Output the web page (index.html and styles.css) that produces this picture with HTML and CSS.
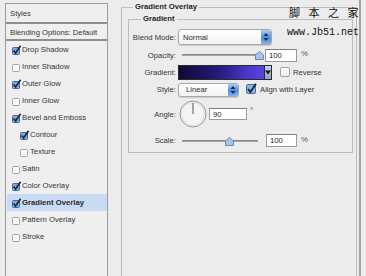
FILE: index.html
```html
<!DOCTYPE html>
<html lang="en">
<head>
    <meta charset="UTF-8">
    <title>Layer Style - Gradient Overlay</title>
    <link rel="stylesheet" href="styles.css">
</head>
<body>

    <div class="dialog">
        <!-- style list on the left -->
        <div class="styles-panel">
            <div class="panel-head">Styles</div>
            <div class="panel-blend">Blending Options: Default</div>
            <ul class="style-list">
                <li><svg class="cb" width="10" height="10" viewBox="0 0 10 10"><rect x="0.5" y="2.5" width="7" height="7" rx="1" fill="#7ea8e0" stroke="#46679e"/><path d="M1.6 5.6 L3.6 8 L8.6 0.8" fill="none" stroke="#16223c" stroke-width="1.6"/></svg>Drop Shadow</li>
                <li><svg class="cb" width="10" height="10" viewBox="0 0 10 10"><rect x="0.5" y="2.5" width="7" height="7" rx="1" fill="#fafafa" stroke="#a4a4a4"/></svg>Inner Shadow</li>
                <li><svg class="cb" width="10" height="10" viewBox="0 0 10 10"><rect x="0.5" y="2.5" width="7" height="7" rx="1" fill="#7ea8e0" stroke="#46679e"/><path d="M1.6 5.6 L3.6 8 L8.6 0.8" fill="none" stroke="#16223c" stroke-width="1.6"/></svg>Outer Glow</li>
                <li><svg class="cb" width="10" height="10" viewBox="0 0 10 10"><rect x="0.5" y="2.5" width="7" height="7" rx="1" fill="#fafafa" stroke="#a4a4a4"/></svg>Inner Glow</li>
                <li><svg class="cb" width="10" height="10" viewBox="0 0 10 10"><rect x="0.5" y="2.5" width="7" height="7" rx="1" fill="#7ea8e0" stroke="#46679e"/><path d="M1.6 5.6 L3.6 8 L8.6 0.8" fill="none" stroke="#16223c" stroke-width="1.6"/></svg>Bevel and Emboss</li>
                <li class="sub"><svg class="cb" width="10" height="10" viewBox="0 0 10 10"><rect x="0.5" y="2.5" width="7" height="7" rx="1" fill="#7ea8e0" stroke="#46679e"/><path d="M1.6 5.6 L3.6 8 L8.6 0.8" fill="none" stroke="#16223c" stroke-width="1.6"/></svg>Contour</li>
                <li class="sub"><svg class="cb" width="10" height="10" viewBox="0 0 10 10"><rect x="0.5" y="2.5" width="7" height="7" rx="1" fill="#fafafa" stroke="#a4a4a4"/></svg>Texture</li>
                <li><svg class="cb" width="10" height="10" viewBox="0 0 10 10"><rect x="0.5" y="2.5" width="7" height="7" rx="1" fill="#fafafa" stroke="#a4a4a4"/></svg>Satin</li>
                <li><svg class="cb" width="10" height="10" viewBox="0 0 10 10"><rect x="0.5" y="2.5" width="7" height="7" rx="1" fill="#7ea8e0" stroke="#46679e"/><path d="M1.6 5.6 L3.6 8 L8.6 0.8" fill="none" stroke="#16223c" stroke-width="1.6"/></svg>Color Overlay</li>
                <li class="sel"><svg class="cb" width="10" height="10" viewBox="0 0 10 10"><rect x="0.5" y="2.5" width="7" height="7" rx="1" fill="#7ea8e0" stroke="#46679e"/><path d="M1.6 5.6 L3.6 8 L8.6 0.8" fill="none" stroke="#16223c" stroke-width="1.6"/></svg>Gradient Overlay</li>
                <li><svg class="cb" width="10" height="10" viewBox="0 0 10 10"><rect x="0.5" y="2.5" width="7" height="7" rx="1" fill="#fafafa" stroke="#a4a4a4"/></svg>Pattern Overlay</li>
                <li><svg class="cb" width="10" height="10" viewBox="0 0 10 10"><rect x="0.5" y="2.5" width="7" height="7" rx="1" fill="#fafafa" stroke="#a4a4a4"/></svg>Stroke</li>
            </ul>
        </div>

        <!-- settings on the right -->
        <fieldset class="group outer">
            <legend>Gradient Overlay</legend>
            <fieldset class="group inner">
                <legend>Gradient</legend>

                <div class="row r-blend">
                    <label>Blend Mode:</label>
                    <div class="select blend-select">Normal<span class="stepper"><svg width="6" height="10" viewBox="0 0 6 10"><path d="M3 1 L5.5 4 L0.5 4 Z M3 9 L5.5 6 L0.5 6 Z" fill="#1b2b48"/></svg></span></div>
                </div>

                <div class="row r-opacity">
                    <label>Opacity:</label>
                    <div class="slider">
                        <div class="track"></div>
                        <svg class="thumb" style="left: 75px" width="9" height="9" viewBox="0 0 9 9"><path d="M4.5 0.5 L8.5 4 L8.5 8.5 L0.5 8.5 L0.5 4 Z" fill="#a9c3e6" stroke="#6a89b4"/></svg>
                    </div>
                    <div class="num">100</div>
                    <span class="unit">%</span>
                </div>

                <div class="row r-gradient">
                    <label>Gradient:</label>
                    <div class="grad-bar"></div>
                    <div class="grad-drop"><svg width="6" height="5" viewBox="0 0 6 5"><path d="M0 0.5 L6 0.5 L3 4.5 Z" fill="#111"/></svg></div>
                    <span class="box reverse-box"></span>
                    <span class="check-label">Reverse</span>
                </div>

                <div class="row r-style">
                    <label>Style:</label>
                    <div class="select style-select">Linear<span class="stepper"><svg width="6" height="10" viewBox="0 0 6 10"><path d="M3 1 L5.5 4 L0.5 4 Z M3 9 L5.5 6 L0.5 6 Z" fill="#1b2b48"/></svg></span></div>
                    <svg class="align-box" width="11" height="11" viewBox="0 0 11 11"><rect x="0.5" y="1.5" width="9" height="9" rx="1.5" fill="#8cb3e6" stroke="#4a6ca3"/><path d="M2 6 L4.4 9 L10 0.8" fill="none" stroke="#15213a" stroke-width="1.8"/></svg>
                    <span class="check-label">Align with Layer</span>
                </div>

                <div class="row r-angle">
                    <label>Angle:</label>
                    <svg class="dial" width="28" height="28" viewBox="0 0 28 28"><circle cx="14" cy="14" r="13" fill="#f4f4f4" stroke="#9a9a9a"/><circle cx="14" cy="14" r="11.5" fill="none" stroke="#dcdcdc"/><line x1="14" y1="14" x2="14" y2="3" stroke="#555" stroke-width="1"/></svg>
                    <div class="num angle-num">90</div>
                    <span class="deg">°</span>
                </div>

                <div class="row r-scale">
                    <label>Scale:</label>
                    <div class="slider">
                        <div class="track"></div>
                        <svg class="thumb" style="left: 45px" width="9" height="9" viewBox="0 0 9 9"><path d="M4.5 0.5 L8.5 4 L8.5 8.5 L0.5 8.5 L0.5 4 Z" fill="#a9c3e6" stroke="#6a89b4"/></svg>
                    </div>
                    <div class="num scale-num">100</div>
                    <span class="unit">%</span>
                </div>
            </fieldset>
        </fieldset>
    </div>

    <!-- site watermark -->
    <div class="watermark">
        <div class="wm-cn">脚 本 之 家</div>
        <div class="wm-url">www.Jb51.net</div>
    </div>

</body>
</html>
```

FILE: styles.css
```css
body {
    margin: 0;
    width: 366px;
    height: 276px;
    overflow: hidden;
    position: relative;
    background-color: #ececec;
    font-family: "Liberation Sans", Arial, sans-serif;
    font-size: 7.7px;
    color: #363636;
}

.dialog {
    display: flex;
    align-items: flex-start;
    width: 359px;
    height: 276px;
    border-right: 2px solid #a2a2a2;
}

/* 左侧样式列表 */
.styles-panel {
    margin: 3px 0 0 5px;
    width: 101px;
    height: 273px;
    border: 1px solid #9c9c9c;
    border-bottom: none;
    background-color: #efefef;
}

.panel-head {
    height: 18px;
    line-height: 19px;
    padding-left: 4px;
    border-bottom: 2px solid #8e8e8e;
}

.panel-blend {
    height: 15px;
    line-height: 17px;
    padding-left: 4px;
    border-bottom: 2px solid #8e8e8e;
}

.style-list {
    list-style: none;
    margin: 0;
    padding: 0;
}

.style-list li {
    height: 17px;
    display: flex;
    align-items: center;
    padding-left: 6px;
}

.style-list li.sub {
    padding-left: 14px;
}

.style-list li.sel {
    margin-left: 1px;
    padding-left: 5px;
    background-color: #c8dbf3;
    font-weight: bold;
    color: #2a2a2a;
}

.cb {
    display: block;
    flex: none;
}

/* 右侧分组框 */
.group {
    margin: 0;
    border: 1px solid #bdbdbd;
}

.group legend {
    padding: 0 2px;
    line-height: 10px;
    font-weight: bold;
    color: #242424;
}

.outer {
    box-sizing: border-box;
    margin: 2px 0 0 13px;
    width: 236px;
    height: 274px;
    padding: 0 3px 0 6px;
    border-bottom: none;
}

.outer legend {
    margin-left: 5px;
}

.inner {
    margin-top: 2px;
    padding: 0 0 4px 0;
}

.inner legend {
    margin-left: 12px;
}

.row {
    display: flex;
    align-items: center;
}

.row label {
    width: 47px;
    text-align: right;
    flex: none;
}

.r-blend { margin-top: 5px; height: 16px; }
.r-opacity { margin-top: 2px; height: 16px; }
.r-gradient { margin-top: 1px; height: 16px; }
.r-style { margin-top: 2px; height: 15px; }
.r-angle { margin-top: 3px; height: 28px; }
.r-scale { margin-top: 5px; height: 15px; }

.select {
    display: flex;
    align-items: center;
    box-sizing: border-box;
    margin-left: 2px;
    border: 1px solid #a8a8a8;
    border-radius: 3px;
    background: linear-gradient(#ffffff, #f2f2f2);
    box-shadow: 0 1px 1px rgba(0, 0, 0, 0.15);
    color: #2c2c2c;
}

.blend-select {
    width: 94px;
    height: 16px;
    padding-left: 4px;
}

.style-select {
    width: 61px;
    height: 14px;
    padding-left: 7px;
}

.stepper {
    margin-left: auto;
    width: 10px;
    height: 100%;
    display: flex;
    align-items: center;
    justify-content: center;
    border-radius: 0 2px 2px 0;
    background: linear-gradient(#a9cdf6, #4d8ee0 55%, #7fb2ef);
}

.slider {
    position: relative;
    margin-left: 4px;
    width: 80px;
    height: 100%;
    display: flex;
    align-items: center;
}

.track {
    margin-left: 2px;
    width: 76px;
    height: 2px;
    background: linear-gradient(#7a7a7a, #b4b4b4);
}

.thumb {
    position: absolute;
    top: 4px;
}

.num {
    box-sizing: border-box;
    margin-left: 5px;
    width: 32px;
    height: 13px;
    padding-left: 3px;
    line-height: 12px;
    border: 1px solid #9a9a9a;
    border-top-color: #7e7e7e;
    background-color: #ffffff;
    color: #222;
}

.scale-num {
    margin-left: 6px;
    width: 31px;
}

.unit {
    margin-left: 4px;
    align-self: flex-start;
    margin-top: 2px;
    color: #555;
}

.grad-bar {
    box-sizing: border-box;
    margin-left: 2px;
    width: 86px;
    height: 15px;
    border: 1px solid #2a2a2a;
    border-right: none;
    background: linear-gradient(to right, #0f0b33, #231a78 45%, #4a36c8 80%, #5a44e0);
}

.grad-drop {
    box-sizing: border-box;
    width: 8px;
    height: 15px;
    display: flex;
    align-items: center;
    justify-content: center;
    border: 1px solid #2a2a2a;
    background: linear-gradient(#c6d2e2, #8ea2c0);
}

.box {
    box-sizing: border-box;
    display: block;
    width: 10px;
    height: 10px;
    border: 1px solid #a0a0a0;
    border-radius: 2px;
    background: linear-gradient(#ffffff, #ececec);
}

.reverse-box {
    margin-left: 8px;
}

.check-label {
    margin-left: 3px;
    color: #333;
}

.align-box {
    display: block;
    margin-left: 7px;
    margin-top: -2px;
}

.dial {
    display: block;
    margin-left: 3px;
}

.angle-num {
    margin-left: 2px;
    width: 38px;
    height: 12px;
}

.deg {
    align-self: flex-start;
    margin-top: 6px;
    margin-left: 3px;
}

/* 水印 */
.watermark {
    position: absolute;
    top: 5px;
    left: 287px;
    width: 79px;
    color: #111;
}

.wm-cn {
    font-family: "Noto Sans CJK SC", sans-serif;
    font-size: 11px;
    line-height: 14px;
    letter-spacing: 3px;
    padding-left: 2px;
}

.wm-url {
    margin-top: 8px;
    font-family: "Liberation Mono", monospace;
    font-size: 10px;
    line-height: 12px;
}
```
